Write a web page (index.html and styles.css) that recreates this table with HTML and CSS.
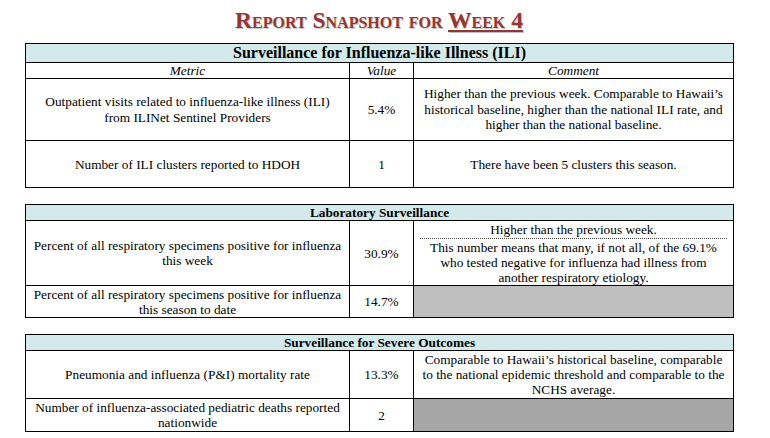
FILE: index.html
```html
<!DOCTYPE html>
<html lang="en">
<head>
<meta charset="utf-8">
<title>Report Snapshot for Week 4</title>
<link rel="stylesheet" href="styles.css">
</head>
<body>
<div class="page">
  <h1 class="title">Report Snapshot for <span class="u">Week 4</span></h1>

  <table class="snap">
    <colgroup><col class="c-metric"><col class="c-value"><col class="c-comment"></colgroup>
    <tr class="band band-lg"><th colspan="3">Surveillance for Influenza-like Illness (ILI)</th></tr>
    <tr class="cols"><td>Metric</td><td>Value</td><td>Comment</td></tr>
    <tr class="h62">
      <td>Outpatient visits related to influenza-like illness (ILI)<br>from ILINet Sentinel Providers</td>
      <td>5.4%</td>
      <td>Higher than the previous week. Comparable to Hawaii’s<br>historical baseline, higher than the national ILI rate, and<br>higher than the national baseline.</td>
    </tr>
    <tr class="h47">
      <td>Number of ILI clusters reported to HDOH</td>
      <td>1</td>
      <td>There have been 5 clusters this season.</td>
    </tr>
  </table>

  <table class="snap">
    <colgroup><col class="c-metric"><col class="c-value"><col class="c-comment"></colgroup>
    <tr class="band"><th colspan="3">Laboratory Surveillance</th></tr>
    <tr class="h65">
      <td>Percent of all respiratory specimens positive for influenza<br>this week</td>
      <td>30.9%</td>
      <td class="split">
        <div class="split-a">Higher than the previous week.</div>
        <div class="split-b">This number means that many, if not all, of the 69.1%<br>who tested negative for influenza had illness from<br>another respiratory etiology.</div>
      </td>
    </tr>
    <tr class="h32">
      <td>Percent of all respiratory specimens positive for influenza<br>this season to date</td>
      <td>14.7%</td>
      <td class="gray-light"></td>
    </tr>
  </table>

  <table class="snap">
    <colgroup><col class="c-metric"><col class="c-value"><col class="c-comment"></colgroup>
    <tr class="band"><th colspan="3">Surveillance for Severe Outcomes</th></tr>
    <tr class="h48">
      <td>Pneumonia and influenza (P&amp;I) mortality rate</td>
      <td>13.3%</td>
      <td>Comparable to Hawaii’s historical baseline, comparable<br>to the national epidemic threshold and comparable to the<br>NCHS average.</td>
    </tr>
    <tr class="h33">
      <td>Number of influenza-associated pediatric deaths reported<br>nationwide</td>
      <td>2</td>
      <td class="gray-dark"></td>
    </tr>
  </table>
</div>
</body>
</html>
```

FILE: styles.css
```css
html, body {
  margin: 0;
  padding: 0;
  background: #ffffff;
}

body {
  font-family: "Liberation Serif", "Times New Roman", serif;
  font-size: 13.3px;
  color: #000000;
}

.page {
  margin-left: 25px;
  width: 708px;
}

.title {
  margin: 0;
  padding-top: 7px;
  height: 36px;
  line-height: 26px;
  font-size: 23.5px;
  font-weight: bold;
  font-variant: small-caps;
  color: #943634;
  text-align: center;
  text-shadow: 1px 1px 1px rgba(0, 0, 0, 0.25);
}

.title .u {
  text-decoration: underline;
  text-decoration-thickness: 2px;
  text-underline-offset: 2px;
}

.snap {
  width: 708px;
  table-layout: fixed;
  border-collapse: collapse;
  margin-bottom: 16px;
}

.c-metric { width: 324px; }
.c-value { width: 64px; }
.c-comment { width: 320px; }

.snap td,
.snap th {
  border: 1px solid #000000;
  padding: 0 5px;
  text-align: center;
  vertical-align: middle;
  line-height: 15px;
  font-weight: normal;
}

.band th {
  background: #d3e9ea;
  font-weight: bold;
  font-size: 13.3px;
  height: 15px;
  line-height: 15px;
}

.band-lg th {
  font-size: 16px;
  height: 18px;
  line-height: 18px;
}

.cols td {
  font-style: italic;
  height: 15px;
}

.h62 td { height: 61px; line-height: 15.5px; }
.h47 td { height: 46px; }
.h65 td { height: 64px; }
.h32 td { height: 31px; }
.h48 td { height: 47px; }
.h33 td { height: 32px; }

.snap td.split {
  padding: 0;
  vertical-align: top;
}

.split-a {
  height: 16px;
  line-height: 16px;
  padding-top: 1px;
}

.split-b {
  margin: 0 6px;
  padding-top: 1px;
  border-top: 1px dotted #444444;
}

.gray-light { background: #bfbfbf; }
.gray-dark { background: #a6a6a6; }
```
